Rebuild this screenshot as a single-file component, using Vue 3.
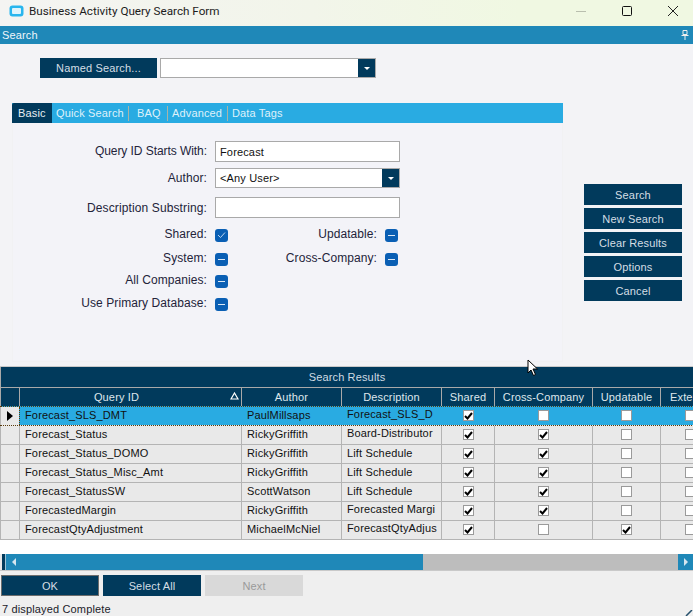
<script setup>
const tabs = ['Basic', 'Quick Search', 'BAQ', 'Advanced', 'Data Tags']
const actions = ['Search', 'New Search', 'Clear Results', 'Options', 'Cancel']
const rows = [
  { id: 'Forecast_SLS_DMT', author: 'PaulMillsaps', desc: 'Forecast_SLS_D', shared: true, cross: false, upd: false },
  { id: 'Forecast_Status', author: 'RickyGriffith', desc: 'Board-Distributor', shared: true, cross: true, upd: false },
  { id: 'Forecast_Status_DOMO', author: 'RickyGriffith', desc: 'Lift Schedule', shared: true, cross: true, upd: false },
  { id: 'Forecast_Status_Misc_Amt', author: 'RickyGriffith', desc: 'Lift Schedule', shared: true, cross: true, upd: false },
  { id: 'Forecast_StatusSW', author: 'ScottWatson', desc: 'Lift Schedule', shared: true, cross: true, upd: false },
  { id: 'ForecastedMargin', author: 'RickyGriffith', desc: 'Forecasted Margi', shared: true, cross: true, upd: false },
  { id: 'ForecastQtyAdjustment', author: 'MichaelMcNiel', desc: 'ForecastQtyAdjus', shared: true, cross: false, upd: true },
]
</script>

<template>
  <div class="window">
    <header class="titlebar">
      <svg class="appicon" width="15" height="12" viewBox="0 0 15 12">
        <rect x="0.5" y="0.5" width="14" height="11" rx="3" fill="#29b6ee" />
        <rect x="3" y="3" width="9" height="6" rx="1" fill="#dff4fc" />
      </svg>
      <span class="title">Business Activity Query Search Form</span>
      <div class="winbtns">
        <svg width="12" height="12" viewBox="0 0 12 12"><path d="M1 6.5h10" stroke="#b9bfae" stroke-width="1" /></svg>
        <svg width="12" height="12" viewBox="0 0 12 12"><rect x="1.5" y="1.5" width="9" height="9" rx="1" fill="none" stroke="#111" stroke-width="1" /></svg>
        <svg width="12" height="12" viewBox="0 0 12 12"><path d="M1 1l10 10M11 1L1 11" stroke="#222" stroke-width="1" /></svg>
      </div>
    </header>

    <div class="searchbar">
      <span>Search</span>
      <svg width="8" height="10" viewBox="0 0 8 10"><path d="M2 .5h4v4H2zM.5 5.5h7M4 5.5V10" fill="none" stroke="#eee" stroke-width="1" /></svg>
    </div>

    <main class="body">
      <div class="named">
        <button class="btn namedbtn">Named Search...</button>
        <div class="combo namedcombo"><span class="comboval"></span><span class="drop"><i></i></span></div>
      </div>

      <div class="middle">
        <section class="tabs">
          <nav class="tabstrip">
            <span v-for="(t, i) in tabs" :key="t" class="tab" :class="['t' + i, { active: i === 0 }]">{{ t }}</span>
          </nav>
          <div class="panel">
            <div class="frow r1">
              <label>Query ID Starts With:</label>
              <div class="input">Forecast</div>
            </div>
            <div class="frow r2">
              <label>Author:</label>
              <div class="combo authorcombo"><span class="comboval">&lt;Any User&gt;</span><span class="drop"><i></i></span></div>
            </div>
            <div class="frow r3">
              <label>Description Substring:</label>
              <div class="input"></div>
            </div>
            <div class="frow r4">
              <label>Shared:</label>
              <span class="tri">
                <svg width="9" height="8" viewBox="0 0 9 8"><path d="M1 4l2.5 2.5L8 1.5" fill="none" stroke="#b9d3ee" stroke-width="1" /></svg>
              </span>
              <label class="lab2">Updatable:</label>
              <span class="tri"><i></i></span>
            </div>
            <div class="frow r5">
              <label>System:</label>
              <span class="tri"><i></i></span>
              <label class="lab2">Cross-Company:</label>
              <span class="tri"><i></i></span>
            </div>
            <div class="frow r6">
              <label>All Companies:</label>
              <span class="tri"><i></i></span>
            </div>
            <div class="frow r7">
              <label>Use Primary Database:</label>
              <span class="tri"><i></i></span>
            </div>
          </div>
        </section>
        <aside class="actions">
          <button v-for="a in actions" :key="a" class="btn action">{{ a }}</button>
        </aside>
      </div>

      <section class="results">
        <div class="caption">Search Results</div>
        <div class="grid ghead">
          <div class="c ind"></div>
          <div class="c qid">
            Query ID
            <svg class="sort" width="9" height="8" viewBox="0 0 9 8"><path d="M4.5 1L8 7H1z" fill="none" stroke="#fff" stroke-width="1.2" /></svg>
          </div>
          <div class="c">Author</div>
          <div class="c">Description</div>
          <div class="c">Shared</div>
          <div class="c">Cross-Company</div>
          <div class="c">Updatable</div>
          <div class="c ext">Exter</div>
        </div>
        <div v-for="(r, i) in rows" :key="r.id" class="grid grow" :class="{ sel: i === 0 }">
          <div class="c ind">
            <svg v-if="i === 0" width="6" height="10" viewBox="0 0 6 10"><path d="M0 0l6 5-6 5z" fill="#000" /></svg>
          </div>
          <div class="c txt">{{ r.id }}</div>
          <div class="c txt">{{ r.author }}</div>
          <div class="c txt" :class="{ hi: r.desc !== 'Lift Schedule' }">{{ r.desc }}</div>
          <div class="c" v-for="k in ['shared', 'cross', 'upd', 'ext']" :key="k" :class="{ extc: k === 'ext' }">
            <span class="cb">
              <svg v-if="r[k]" width="9" height="8" viewBox="0 0 9 8"><path d="M1 4l2.5 2.5L8 1" fill="none" stroke="#000" stroke-width="2" /></svg>
            </span>
          </div>
        </div>
        <div class="blank"></div>
        <div class="scroll">
          <span class="gutter"></span>
          <span class="leftcap"></span>
          <span class="thumb"><i></i></span>
          <span class="track"></span>
          <span class="arrow"><i></i></span>
        </div>
      </section>

      <div class="foot">
        <button class="btn fbtn okbtn">OK</button>
        <button class="btn fbtn">Select All</button>
        <button class="btn fbtn off">Next</button>
      </div>
      <div class="status">7 displayed Complete</div>
    </main>

    <svg class="cursor" width="13" height="18" viewBox="0 0 13 18">
      <path d="M1 1v13l3-3 2.5 5.5 2-1L6 10h4.5z" fill="#fff" stroke="#000" stroke-width="1" />
    </svg>
    <svg class="grip" width="8" height="6" viewBox="0 0 8 6"><path d="M1 6l6-6" stroke="#27506c" stroke-width="1.5" /></svg>
  </div>
</template>

<style scoped>
* { box-sizing: border-box; }
.window {
  position: relative;
  width: 693px;
  height: 616px;
  overflow: hidden;
  background: #f3f3f6;
  font-family: "Liberation Sans", Arial, sans-serif;
  font-size: 11px;
  letter-spacing: 0.15px;
  color: #111;
}
.titlebar {
  height: 26px;
  display: flex;
  align-items: center;
  padding: 0 0 5px 9px;
  background: linear-gradient(90deg, #f4f4f2 0%, #f2f5ea 45%, #f0f8e2 75%, #f0f8e2 100%);
}
.title { margin-left: 5px; font-size: 11.7px; letter-spacing: 0; color: #1c1c1c; font-family: Roboto, "Liberation Sans", sans-serif; }
.appicon { display: block; }
.winbtns {
  margin-left: auto;
  display: flex;
  gap: 34px;
  padding-right: 14px;
}
.winbtns svg { display: block; }
.searchbar {
  height: 18px;
  background: #1f88b8;
  color: #f0f6fa;
  display: flex;
  align-items: center;
  justify-content: space-between;
  padding: 0 4px 0 2px;
}
.body { display: flex; flex-direction: column; height: 572px; }
.named {
  display: flex;
  gap: 3px;
  padding: 14px 0 0 40px;
  height: 59px;
  flex: none;
}
.btn {
  border: 0;
  padding: 0;
  background: #013a5c;
  color: #d5dee5;
  font: inherit;
  letter-spacing: inherit;
  text-align: center;
}
.namedbtn { width: 117px; height: 20px; }
.combo {
  display: flex;
  background: #fff;
  border: 1px solid #a9a9a9;
  height: 20px;
}
.namedcombo { width: 216px; }
.authorcombo { width: 185px; }
.comboval { flex: 1; padding-left: 4px; line-height: 19px; color: #111; }
.drop {
  width: 17px;
  background: #013a5c;
  display: flex;
  align-items: center;
  justify-content: center;
}
.drop i {
  display: block;
  border-left: 3px solid transparent;
  border-right: 3px solid transparent;
  border-top: 3px solid #fff;
}
.middle { display: flex; height: 263px; flex: none; }
.tabs {
  width: 551px;
  margin-left: 12px;
  display: flex;
  flex-direction: column;
}
.tabstrip {
  height: 20px;
  background: #29abe2;
  display: flex;
  align-items: center;
  color: #dff1fa;
}
.tab { height: 20px; line-height: 20px; white-space: nowrap; }
.tab.t0 { width: 40px; padding-left: 6px; background: #013a5c; color: #e8eef2; border-radius: 2px 0 0 0; }
.tab.t1 { width: 77px; padding-left: 4px; border-right: 1px solid #a8b4a8; height: 15px; line-height: 15px; }
.tab.t2 { width: 39px; padding-left: 8px; border-right: 1px solid #a8b4a8; height: 15px; line-height: 15px; }
.tab.t3 { width: 60px; padding-left: 4px; border-right: 1px solid #a8b4a8; height: 15px; line-height: 15px; }
.tab.t4 { padding-left: 4px; }
.panel {
  height: 239px;
  background: #f3f3f8;
  border: 1px solid #f1f1f3;
  border-top: 0;
  color: #1b1b2a;
  padding-top: 18px;
  font-size: 12px;
}
.frow { display: flex; align-items: center; }
.frow label {
  width: 194px;
  text-align: right;
  margin-right: 8px;
  padding-bottom: 1px;
  white-space: nowrap;
  color: #23233a;
  font-size: 12px;
  letter-spacing: 0.08px;
}
.frow .lab2 { width: 149px; margin-right: 8px; }
.r1 label { letter-spacing: -0.06px; }
.r3 label { padding-bottom: 0; padding-top: 1px; letter-spacing: 0.12px; }
.r4 label, .r5 label, .r6 label, .r7 label { padding-bottom: 3px; }
.r1, .r3 { height: 21px; }
.r2 { height: 20px; margin-top: 6px; }
.r3 { margin-top: 9px; }
.r4 { height: 14px; margin-top: 10px; }
.r5 { height: 14px; margin-top: 10px; }
.r6 { height: 14px; margin-top: 8px; }
.r7 { height: 14px; margin-top: 9px; }
.input {
  width: 185px;
  height: 21px;
  background: #fff;
  border: 1px solid #a9a9a9;
  padding-left: 4px;
  line-height: 20px;
  font-size: 11px;
  letter-spacing: 0.15px;
  color: #111;
}
.authorcombo { font-size: 11px; letter-spacing: 0.15px; }
.tri {
  width: 13px;
  height: 13px;
  flex: none;
  border-radius: 3px;
  background: #0a5fb4;
  display: flex;
  align-items: center;
  justify-content: center;
}
.tri i { display: block; width: 7px; height: 1px; background: #dbe8f5; }
.actions {
  margin-left: 21px;
  padding-top: 81px;
  display: flex;
  flex-direction: column;
  gap: 3px;
}
.action { width: 98px; height: 21px; }
.results {
  flex: none;
  display: flex;
  flex-direction: column;
  border-top: 1px solid #c9c9c9;
  background: #fff;
}
.caption {
  height: 20px;
  background: #013a5c;
  color: #cfdbe3;
  text-align: center;
  line-height: 20px;
  border-left: 1px solid #a9a9a9;
  flex: none;
}
.grid {
  display: grid;
  grid-template-columns: 19px 222px 100px 100px 53px 98px 68px 80px;
  width: 740px;
  flex: none;
}
.ghead {
  height: 19px;
  background: #013a5c;
  color: #dfe7ec;
  border-top: 1px solid #a9a9a9;
}
.ghead .c {
  display: flex;
  align-items: center;
  justify-content: center;
  border-left: 1px solid #a9a9a9;
  position: relative;
}
.ghead .qid { padding-right: 28px; }
.ghead .ext { justify-content: flex-start; padding-left: 9px; }
.sort { position: absolute; right: 2px; top: 4px; }
.grow {
  height: 19px;
  background: #e9e9e9;
  border-top: 1px solid #b4b4b4;
  color: #111;
}
.grow .c {
  display: flex;
  align-items: center;
  justify-content: center;
  border-left: 1px solid #b4b4b4;
  min-width: 0;
  overflow: hidden;
}
.grow .txt { justify-content: flex-start; padding: 0 0 3px 5px; white-space: nowrap; }
.grow .hi { padding-bottom: 5px; }
.grow .extc { justify-content: flex-start; padding-left: 24px; }
.grow.sel { background: #29abe2; border-top: 1px dotted #5a3c0c; }
.sel + .grow { border-top: 1px dotted #5a3c0c; }
.grow.sel .c { border-left-color: #29abe2; }
.grow.sel .ind { background: #e9e9e9; border-left-color: #b4b4b4; }
.grow.sel .ind + .c { border-left: 1px dotted #5a3c0c; }
.cb {
  width: 11px;
  height: 11px;
  flex: none;
  margin-bottom: 1px;
  background: #fff;
  border: 1px solid #9a9a9a;
  display: flex;
  align-items: center;
  justify-content: center;
}
.blank {
  height: 15px;
  border-top: 1px solid #b4b4b4;
  flex: none;
}
.scroll {
  height: 17px;
  display: flex;
  flex: none;
  border-bottom: 1px solid #c9c9c9;
}
.gutter { width: 2px; background: #e9e9e9; flex: none; }
.leftcap { width: 4px; background: #013a5c; border-right: 1px solid #9fc4d6; flex: none; }
.thumb {
  width: 417px;
  flex: none;
  background: #1f88b8;
  display: flex;
  align-items: center;
  padding-left: 6px;
}
.thumb i {
  display: block;
  border-top: 4px solid transparent;
  border-bottom: 4px solid transparent;
  border-right: 4px solid #d5e6ef;
}
.track { flex: 1; background: #bdbdbd; }
.arrow {
  width: 15px;
  flex: none;
  display: flex;
  align-items: center;
  justify-content: center;
  background: #1f88b8;
}
.arrow i {
  display: block;
  border-top: 4px solid transparent;
  border-bottom: 4px solid transparent;
  border-left: 4px solid #d5e6ef;
}
.foot {
  display: flex;
  gap: 4px;
  padding: 4px 0 0 1px;
  background: #efefef;
  height: 25px;
  flex: none;
}
.fbtn { width: 98px; height: 21px; }
.okbtn { border: 1px solid #6d6d6d; }
.off { background: #d9d9d9; color: #9a9a9a; }
.status {
  flex: 1;
  background: #efefef;
  padding: 5px 0 0 2px;
  line-height: 16px;
  color: #1b1b2a;
}
.cursor { position: absolute; left: 527px; top: 359px; }
.grip { position: absolute; right: 0; bottom: 0; }
</style>
